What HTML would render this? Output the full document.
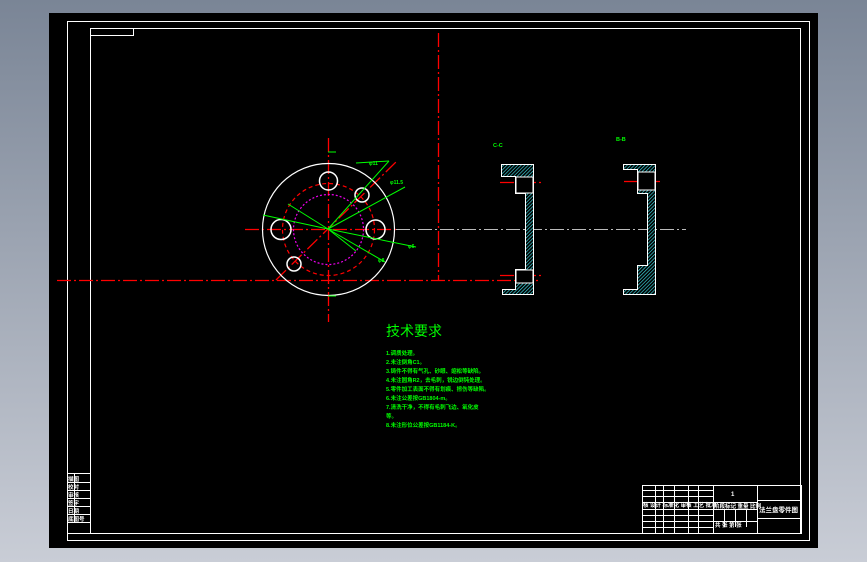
<!DOCTYPE html>
<html><head><meta charset="utf-8"><style>
html,body{margin:0;padding:0;width:867px;height:562px;overflow:hidden;background:#c9cdd6}
svg{display:block}
text{font-family:"Liberation Sans","Noto Sans CJK SC",sans-serif}
</style></head><body>
<svg width="867" height="562" viewBox="0 0 867 562" xmlns="http://www.w3.org/2000/svg">
<defs>
<linearGradient id="bg" x1="0" y1="0" x2="0" y2="1"><stop offset="0" stop-color="#7a8596"/><stop offset="1" stop-color="#c9cdd6"/></linearGradient>
<pattern id="h" width="2.5" height="2.5" patternUnits="userSpaceOnUse" patternTransform="rotate(45)"><rect width="3" height="3" fill="#000"/><line x1="0" y1="0" x2="0" y2="3" stroke="#40e0e8" stroke-width="1.3"/></pattern>
</defs>
<rect width="867" height="562" fill="url(#bg)"/>
<rect x="49" y="13" width="769" height="535" fill="#000"/>
<g fill="none" stroke="#fff" stroke-width="1">
<rect x="67.5" y="21.5" width="742" height="519"/>
<rect x="90.5" y="28.5" width="710" height="505"/>
<rect x="90.5" y="28.5" width="43" height="7"/>
<rect x="67.5" y="473.5" width="23" height="60"/>
<line x1="67" y1="482.5" x2="90" y2="482.5"/><line x1="67" y1="490.5" x2="90" y2="490.5"/><line x1="67" y1="498.5" x2="90" y2="498.5"/><line x1="67" y1="506.5" x2="90" y2="506.5"/><line x1="67" y1="514.5" x2="90" y2="514.5"/><line x1="67" y1="522.5" x2="90" y2="522.5"/><line x1="74.5" y1="473" x2="74.5" y2="522"/>
<rect x="642.5" y="485.5" width="159" height="48"/>
<line x1="713.5" y1="485" x2="713.5" y2="534"/><line x1="757.5" y1="485" x2="757.5" y2="534"/>
<line x1="757" y1="500.5" x2="801" y2="500.5"/><line x1="757" y1="518.5" x2="801" y2="518.5"/>
<line x1="642" y1="490.5" x2="713" y2="490.5"/><line x1="642" y1="496.5" x2="713" y2="496.5"/><line x1="642" y1="502.5" x2="757" y2="502.5"/><line x1="642" y1="509.5" x2="757" y2="509.5"/><line x1="642" y1="515.5" x2="713" y2="515.5"/><line x1="642" y1="521.5" x2="757" y2="521.5"/><line x1="642" y1="527.5" x2="713" y2="527.5"/>
<line x1="655.5" y1="485" x2="655.5" y2="534"/><line x1="663.5" y1="485" x2="663.5" y2="534"/><line x1="674.5" y1="485" x2="674.5" y2="534"/><line x1="688.5" y1="485" x2="688.5" y2="534"/><line x1="698.5" y1="485" x2="698.5" y2="534"/>
<line x1="724.5" y1="509" x2="724.5" y2="527"/><line x1="735.5" y1="509" x2="735.5" y2="527"/><line x1="746.5" y1="509" x2="746.5" y2="527"/>
</g>
<g fill="#fff" font-size="5.5" font-weight="bold">
<text x="643" y="507">核 设计 标准化 审核 工艺 批准</text>
<text x="714" y="508">阶段标记 重量 比例</text>
<text x="759" y="512" font-size="6.5">法兰盘零件图</text>
<text x="731" y="496" font-size="6">1</text>
<text x="715" y="527">共 张 第 张</text>
<text x="68" y="481">描图</text><text x="68" y="489">校对</text><text x="68" y="497">审核</text><text x="68" y="505">签字</text><text x="68" y="513">日期</text><text x="68" y="521">底图号</text>
</g>
<g stroke="#f00" stroke-width="1.3" fill="none" stroke-dasharray="14 3 2 3">
<line x1="57" y1="280.5" x2="540" y2="280.5"/>
<line x1="438.5" y1="33" x2="438.5" y2="280"/>
<line x1="328.5" y1="138" x2="328.5" y2="322"/>
<line x1="245" y1="229.5" x2="396" y2="229.5"/>
<line x1="276" y1="280" x2="396" y2="162"/>
<line x1="500" y1="182.5" x2="543" y2="182.5"/><line x1="500" y1="275.5" x2="543" y2="275.5"/>
<line x1="624" y1="181.5" x2="663" y2="181.5"/>
</g>
<line x1="396" y1="229.5" x2="686" y2="229.5" stroke="#bbb" stroke-width="1" stroke-dasharray="14 3 2 3"/>
<circle cx="328.5" cy="229.5" r="66" fill="none" stroke="#fff" stroke-width="1.2"/>
<circle cx="328.5" cy="229.5" r="46" fill="none" stroke="#f00" stroke-width="1.2" stroke-dasharray="4 3"/>
<circle cx="328.5" cy="229.5" r="35" fill="none" stroke="#e0e" stroke-width="1.2" stroke-dasharray="2 2"/>
<g fill="none" stroke="#fff" stroke-width="1.5">
<circle cx="328.5" cy="181" r="9"/><circle cx="281" cy="229.5" r="10"/><circle cx="375.5" cy="229.5" r="9.5"/><circle cx="362" cy="195" r="7"/><circle cx="294" cy="264" r="7"/>
</g>
<g stroke="#0f0" stroke-width="1">
<line x1="328" y1="229" x2="389" y2="161"/><line x1="389" y1="161" x2="356" y2="163"/>
<line x1="328" y1="229" x2="405" y2="187"/>
<line x1="263" y1="215" x2="328" y2="229"/><line x1="328" y1="229" x2="416" y2="247"/>
<line x1="288" y1="204" x2="328" y2="229"/><line x1="328" y1="229" x2="385" y2="262"/>
<line x1="328" y1="229" x2="356" y2="251"/>
<line x1="328" y1="152" x2="336" y2="152"/><line x1="328" y1="296" x2="336" y2="296"/>
</g>
<g fill="#0f0" font-size="5" font-weight="bold"><text x="369" y="165">φ11</text><text x="390" y="184">φ11.5</text><text x="408" y="248">φ6</text><text x="378" y="262">φ8</text></g>
<path d="M501.5 164.5 H533.5 V294.5 H502.5 V289.5 H515.5 V269.5 H525.5 V235 V193.5 H515.5 V176.5 H501.5 Z" fill="url(#h)" stroke="#fff" stroke-width="1"/>
<rect x="516" y="177" width="17" height="16" fill="#000" stroke="#fff"/>
<rect x="516" y="270" width="17" height="13" fill="#000" stroke="#fff"/>
<path d="M623.5 164.5 H655.5 V294.5 H623.5 V289.5 H637.5 V265.5 H647.5 V193.5 H637.5 V169.5 H623.5 Z" fill="url(#h)" stroke="#fff" stroke-width="1"/>
<rect x="638" y="172" width="17" height="18" fill="#000" stroke="#fff"/>
<g fill="#0f0" font-size="5.5" font-weight="bold"><text x="493" y="147">C-C</text><text x="616" y="141">B-B</text></g>
<text x="386" y="336" fill="#0f0" font-size="14">技术要求</text>
<g fill="#0f0" font-size="5.5" font-weight="bold">
<text x="386" y="355">1.调质处理。</text>
<text x="386" y="364">2.未注倒角C1。</text>
<text x="386" y="373">3.铸件不得有气孔、砂眼、缩松等缺陷。</text>
<text x="386" y="382">4.未注圆角R2，去毛刺，锐边倒钝处理。</text>
<text x="386" y="391">5.零件加工表面不得有划痕、擦伤等缺陷。</text>
<text x="386" y="400">6.未注公差按GB1804-m。</text>
<text x="386" y="409">7.清洗干净，不得有毛刺飞边、氧化皮</text>
<text x="386" y="418">等。</text>
<text x="386" y="427">8.未注形位公差按GB1184-K。</text>
</g>
</svg>
</body></html>
